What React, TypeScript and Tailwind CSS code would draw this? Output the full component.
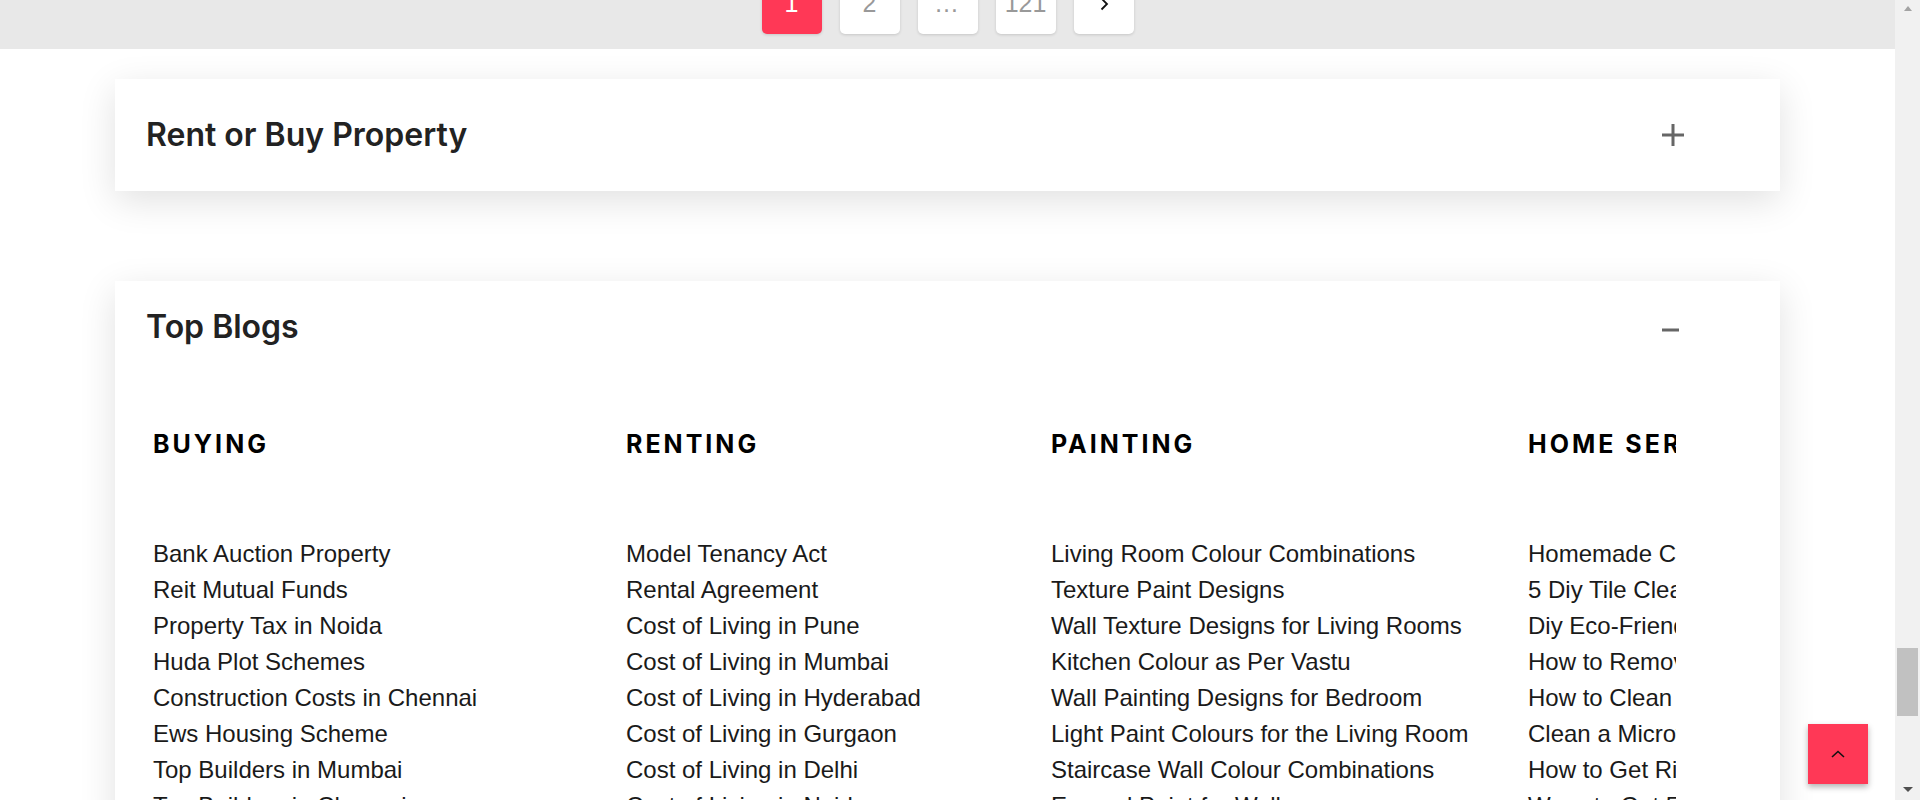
import React from 'react';

const columns = [
  {
    title: 'BUYING',
    width: 'w-[473px]',
    links: [
      'Bank Auction Property',
      'Reit Mutual Funds',
      'Property Tax in Noida',
      'Huda Plot Schemes',
      'Construction Costs in Chennai',
      'Ews Housing Scheme',
      'Top Builders in Mumbai',
      'Top Builders in Chennai',
    ],
  },
  {
    title: 'RENTING',
    width: 'w-[425px]',
    links: [
      'Model Tenancy Act',
      'Rental Agreement',
      'Cost of Living in Pune',
      'Cost of Living in Mumbai',
      'Cost of Living in Hyderabad',
      'Cost of Living in Gurgaon',
      'Cost of Living in Delhi',
      'Cost of Living in Noida',
    ],
  },
  {
    title: 'PAINTING',
    width: 'w-[477px]',
    links: [
      'Living Room Colour Combinations',
      'Texture Paint Designs',
      'Wall Texture Designs for Living Rooms',
      'Kitchen Colour as Per Vastu',
      'Wall Painting Designs for Bedroom',
      'Light Paint Colours for the Living Room',
      'Staircase Wall Colour Combinations',
      'Enamel Paint for Walls',
    ],
  },
  {
    title: 'HOME SERVICES',
    width: 'w-[400px]',
    links: [
      'Homemade Cleaners for Home',
      '5 Diy Tile Cleaners',
      'Diy Eco-Friendly Cleaners',
      'How to Remove Stains',
      'How to Clean Silver',
      'Clean a Microwave',
      'How to Get Rid of Cockroaches',
      'Ways to Get 5 Star Hygiene',
    ],
  },
];

function PageButton({ children, active }: { children: React.ReactNode; active?: boolean }) {
  return (
    <div
      className={
        active
          ? 'flex h-[60px] w-[60px] items-center justify-center rounded-[5px] bg-[#ff3856] text-[25px] text-white shadow-[0_1px_3px_rgba(0,0,0,0.15)]'
          : 'flex h-[60px] w-[60px] items-center justify-center rounded-[5px] bg-white text-[25px] text-[#999] shadow-[0_1px_3px_rgba(0,0,0,0.15)]'
      }
    >
      {children}
    </div>
  );
}

export default function App() {
  return (
    <div className="flex h-[800px] w-[1920px] overflow-hidden bg-white font-['Liberation_Sans',Arial,sans-serif]">
      <div className="relative flex w-[1895px] flex-col">
        {/* pagination strip */}
        <div className="flex h-[49px] shrink-0 items-end justify-center gap-[18px] overflow-hidden bg-[#e8e8e8] pb-[15px]">
          <PageButton active>1</PageButton>
          <PageButton>2</PageButton>
          <PageButton>
            <span className="tracking-[2px]">…</span>
          </PageButton>
          <PageButton>121</PageButton>
          <PageButton>
            <svg width="14" height="14" viewBox="0 0 14 14" fill="none">
              <path d="M4.5 1.5 L10 7 L4.5 12.5" stroke="#111" strokeWidth="1.8" />
            </svg>
          </PageButton>
        </div>

        <div className="flex flex-col px-[115px] pt-[30px]">
          {/* collapsed accordion */}
          <div className="flex h-[112px] items-center justify-between bg-white pl-[31px] pr-[96px] shadow-[0_10px_35px_rgba(0,0,0,0.12)]">
            <h2 className="font-['Inter',sans-serif] text-[32px] font-semibold leading-none text-[#222]">
              Rent or Buy Property
            </h2>
            <svg width="22" height="22" viewBox="0 0 22 22">
              <rect x="0" y="9.5" width="22" height="3" fill="#666" />
              <rect x="9.5" y="0" width="3" height="22" fill="#666" />
            </svg>
          </div>

          {/* open accordion */}
          <div className="mt-[90px] bg-white pl-[31px] pr-[104px] pt-[30px] shadow-[0_10px_35px_rgba(0,0,0,0.12)]">
            <div className="flex items-start justify-between">
              <h2 className="font-['Inter',sans-serif] text-[32px] font-semibold leading-none text-[#222]">
                Top Blogs
              </h2>
              <svg width="17" height="22" viewBox="0 0 17 22" className="mr-[-3px] mt-[8px]">
                <rect x="0" y="9.5" width="17" height="3" fill="#666" />
              </svg>
            </div>

            <div className="mt-[89px] flex overflow-hidden pl-[7px]">
              {columns.map((col) => (
                <div key={col.title} className={`${col.width} shrink-0`}>
                  <h3 className="whitespace-nowrap font-['Inter',sans-serif] text-[25px] font-bold leading-none tracking-[3px] text-black">
                    {col.title}
                  </h3>
                  <ul className="mt-[79px] flex flex-col">
                    {col.links.map((link) => (
                      <li key={link} className="whitespace-nowrap text-[24px] leading-[36px] text-[#1a1a1a]">
                        {link}
                      </li>
                    ))}
                  </ul>
                </div>
              ))}
            </div>
          </div>
        </div>

        {/* back to top */}
        <button
          type="button"
          className="absolute bottom-[16px] right-[27px] flex h-[60px] w-[60px] items-center justify-center bg-[#ff3856] shadow-[0_3px_6px_rgba(0,0,0,0.3)]"
        >
          <svg width="14" height="8" viewBox="0 0 14 8" fill="none">
            <path d="M1 7 L7 1.5 L13 7" stroke="#111" strokeWidth="1.6" />
          </svg>
        </button>
      </div>

      {/* scrollbar */}
      <div className="relative w-[25px] shrink-0 bg-[#f1f1f1]">
        <div className="absolute left-[9px] top-[6px] h-0 w-0 border-x-[4px] border-b-[5px] border-x-transparent border-b-[#a3a3a3]" />
        <div className="absolute left-[2px] top-[648px] h-[68px] w-[21px] bg-[#c1c1c1]" />
        <div className="absolute bottom-[8px] left-[8px] h-0 w-0 border-x-[5px] border-t-[5px] border-x-transparent border-t-[#505050]" />
      </div>
    </div>
  );
}
